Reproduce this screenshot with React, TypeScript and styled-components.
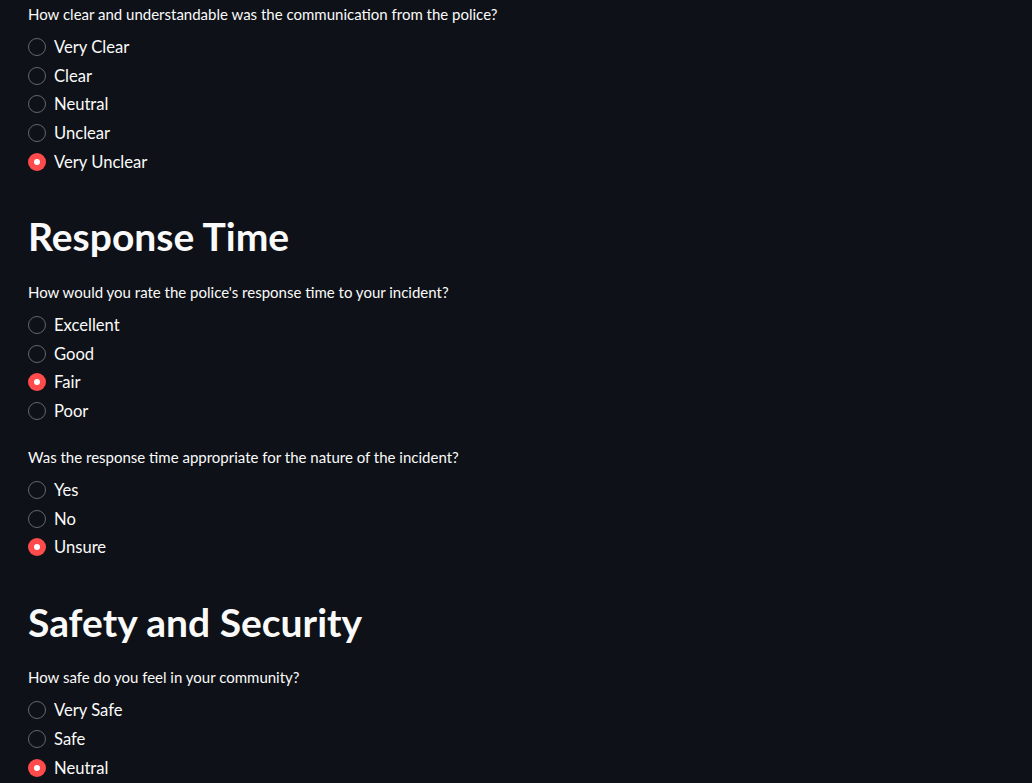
import React from "react";
import styled, { createGlobalStyle } from "styled-components";

const GlobalStyle = createGlobalStyle`
  html, body {
    margin: 0;
    padding: 0;
    background: #0e1117;
  }
  body {
    font-family: "Lato", "Noto Sans", sans-serif;
    color: #fafafa;
  }
`;

const Page = styled.main`
  min-height: 783px;
  box-sizing: border-box;
  padding: 3px 28px 0 28px;
  background: #0e1117;
  display: flex;
  flex-direction: column;
`;

const Heading = styled.h2`
  margin: 39px 0 22.4px 0;
  font-size: 39px;
  line-height: 43.2px;
  font-weight: 700;
  color: #fafafa;
  letter-spacing: 0;
`;

const Question = styled.div<{ $gapTop?: number }>`
  margin-top: ${(p) => p.$gapTop ?? 0}px;
  font-size: 15px;
  line-height: 22px;
  color: #fafafa;
`;

const Group = styled.div`
  margin-top: 7.6px;
  display: flex;
  flex-direction: column;
`;

const Row = styled.label`
  height: 28.75px;
  display: flex;
  align-items: center;
  gap: 8px;
  font-size: 16.6px;
  color: #fafafa;
  cursor: pointer;
`;

const Dot = styled.span<{ $on: boolean }>`
  width: 18px;
  height: 18px;
  box-sizing: border-box;
  border-radius: 50%;
  flex: none;
  display: flex;
  align-items: center;
  justify-content: center;
  background: ${(p) => (p.$on ? "#ff4b4b" : "transparent")};
  border: ${(p) => (p.$on ? "none" : "1px solid #64666d")};
  &::after {
    content: "";
    display: ${(p) => (p.$on ? "block" : "none")};
    width: 6px;
    height: 6px;
    border-radius: 50%;
    background: #ffffff;
  }
`;

type Q = { q: string; opts: string[]; sel: number; gap?: number };

const Radio = ({ q, opts, sel, gap }: Q) => (
  <>
    <Question $gapTop={gap}>{q}</Question>
    <Group>
      {opts.map((o, i) => (
        <Row key={o}>
          <Dot $on={i === sel} />
          {o}
        </Row>
      ))}
    </Group>
  </>
);

export default function App() {
  return (
    <>
      <GlobalStyle />
      <Page>
        <Radio
          q="How clear and understandable was the communication from the police?"
          opts={["Very Clear", "Clear", "Neutral", "Unclear", "Very Unclear"]}
          sel={4}
        />
        <Heading>Response Time</Heading>
        <Radio
          q="How would you rate the police's response time to your incident?"
          opts={["Excellent", "Good", "Fair", "Poor"]}
          sel={2}
        />
        <Radio
          q="Was the response time appropriate for the nature of the incident?"
          opts={["Yes", "No", "Unsure"]}
          sel={2}
          gap={20.4}
        />
        <Heading>Safety and Security</Heading>
        <Radio
          q="How safe do you feel in your community?"
          opts={["Very Safe", "Safe", "Neutral"]}
          sel={2}
        />
      </Page>
    </>
  );
}
